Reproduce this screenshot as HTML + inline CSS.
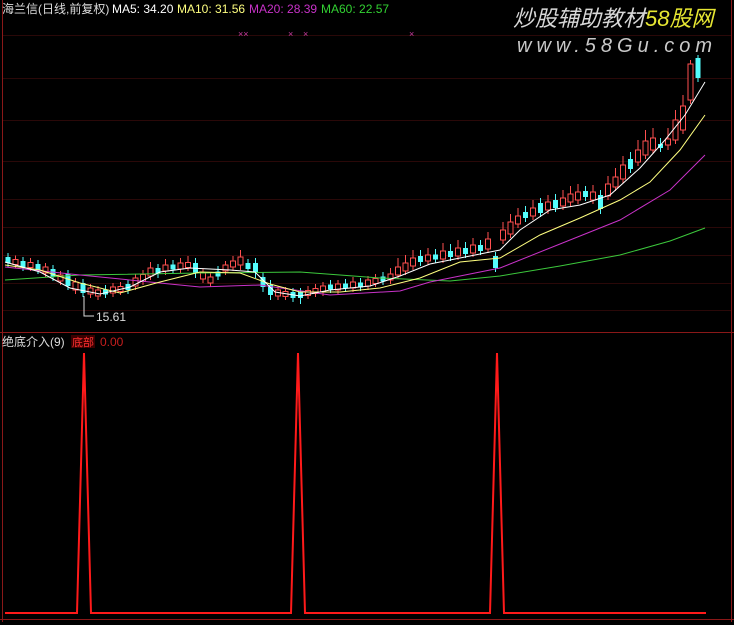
<!DOCTYPE html>
<html><head><meta charset="utf-8"><style>
html,body{margin:0;padding:0;background:#000;width:734px;height:625px;overflow:hidden}
svg{display:block}
text{font-family:"Liberation Sans","Noto Sans CJK SC",sans-serif}
</style></head><body>
<svg width="734" height="625" xmlns="http://www.w3.org/2000/svg">
<rect width="734" height="625" fill="#000"/>
<g stroke="#2a0808" stroke-width="1">
<line x1="3" y1="35.5" x2="731" y2="35.5"/><line x1="3" y1="78.5" x2="731" y2="78.5"/>
<line x1="3" y1="120.5" x2="731" y2="120.5"/><line x1="3" y1="161.5" x2="731" y2="161.5"/>
<line x1="3" y1="199.5" x2="731" y2="199.5"/><line x1="3" y1="227.5" x2="731" y2="227.5"/>
<line x1="3" y1="255.5" x2="731" y2="255.5"/><line x1="3" y1="283.5" x2="731" y2="283.5"/>
<line x1="3" y1="310.5" x2="731" y2="310.5"/>
</g>
<line x1="2.5" y1="0" x2="2.5" y2="622" stroke="#8a1818"/>
<line x1="731.5" y1="0" x2="731.5" y2="622" stroke="#8a1818"/>
<line x1="0" y1="332.5" x2="734" y2="332.5" stroke="#8a1818"/>
<line x1="0" y1="619.5" x2="734" y2="619.5" stroke="#8a1818"/>

<path fill="none" stroke="#ff5050" d="M15.5,255.5V268.5M30.5,258V271M45.5,263V277M60.5,271V285M75.5,278V294M90.5,284V298M98,286V300M113,283V297M120.5,282V295M135.5,274V290M143,270V285M150.5,262V280M165.5,259V275M180.5,258V273M188,256V271M203,269V283M210.5,273V287M225.5,261V275M233,256V271M240.5,250V270M278,286V300M285.5,287V300M308,286V299M315.5,284V297M323,282V296M338,280V294M353,277V292M368,276V290M375.5,274V287M390.5,268V284M398,258V279M405.5,255V275M413,250V270M428,248V265M443,243V263M458,240V260M473,238V257M488,232V253M503,222V244M510.5,214V238M518,208V228M533,200V220M548,195V214M563,190V210M570.5,186V206M578,184V204M593,185V204M608,176V200M615.5,168V191M623,156V183M638,140V166M645.5,130V159M653,128V154M668,128V150M675.5,110V144M683,95V134M690.5,60V104"/>
<path fill="none" stroke="#54fcfc" d="M8,253V267M23,257V271M38,260V274M53,265V281M68,270V290M83,279V297M105.5,285V298M128,280V294M158,264V278M173,260V273M195.5,258V278M218,266V280M248,259V273M255.5,258V278M263,272V292M270.5,280V300M293,288V302M300.5,288V304M330.5,280V293M345.5,279V292M360.5,278V291M383,272V285M420.5,250V266M435.5,249V263M450.5,244V261M465.5,242V258M480.5,240V255M495.5,252V272M525.5,206V222M540.5,198V217M555.5,194V212M585.5,186V201M600.5,190V214M630.5,152V173M660.5,138V152M698,55V82"/>
<g fill="#000" stroke="#ff5050">
<rect x="13" y="259.5" width="5" height="5"/><rect x="28" y="262.5" width="5" height="5"/><rect x="43" y="267" width="5" height="6"/><rect x="58" y="275" width="5" height="6"/><rect x="73" y="282" width="5" height="8"/><rect x="88" y="288" width="5" height="6"/><rect x="95.5" y="290" width="5" height="6"/><rect x="110.5" y="287" width="5" height="6"/><rect x="118" y="286.5" width="5" height="5"/><rect x="133" y="278" width="5" height="8"/><rect x="140.5" y="274.5" width="5" height="7"/><rect x="148" y="268" width="5" height="8"/><rect x="163" y="265" width="5" height="6"/><rect x="178" y="263" width="5" height="6"/><rect x="185.5" y="262.5" width="5" height="5"/><rect x="200.5" y="273" width="5" height="6"/><rect x="208" y="277" width="5" height="6"/><rect x="223" y="265" width="5" height="6"/><rect x="230.5" y="261" width="5" height="6"/><rect x="238" y="257" width="5" height="8"/><rect x="275.5" y="290" width="5" height="6"/><rect x="283" y="291.5" width="5" height="5"/><rect x="305.5" y="290.5" width="5" height="5"/><rect x="313" y="288.5" width="5" height="5"/><rect x="320.5" y="286" width="5" height="6"/><rect x="335.5" y="284" width="5" height="6"/><rect x="350.5" y="282" width="5" height="6"/><rect x="365.5" y="280" width="5" height="6"/><rect x="373" y="278.5" width="5" height="5"/><rect x="388" y="274" width="5" height="6"/><rect x="395.5" y="267" width="5" height="8"/><rect x="403" y="263" width="5" height="8"/><rect x="410.5" y="258" width="5" height="8"/><rect x="425.5" y="255" width="5" height="6"/><rect x="440.5" y="251" width="5" height="8"/><rect x="455.5" y="248" width="5" height="8"/><rect x="470.5" y="245" width="5" height="8"/><rect x="485.5" y="239" width="5" height="10"/><rect x="500.5" y="230" width="5" height="10"/><rect x="508" y="222" width="5" height="12"/><rect x="515.5" y="216" width="5" height="8"/><rect x="530.5" y="208" width="5" height="8"/><rect x="545.5" y="202" width="5" height="8"/><rect x="560.5" y="198" width="5" height="8"/><rect x="568" y="194" width="5" height="8"/><rect x="575.5" y="192" width="5" height="8"/><rect x="590.5" y="192" width="5" height="8"/><rect x="605.5" y="184" width="5" height="12"/><rect x="613" y="177" width="5" height="10"/><rect x="620.5" y="165" width="5" height="14"/><rect x="635.5" y="150" width="5" height="12"/><rect x="643" y="141" width="5" height="14"/><rect x="650.5" y="138" width="5" height="12"/><rect x="665.5" y="139" width="5" height="6"/><rect x="673" y="120" width="5" height="20"/><rect x="680.5" y="106" width="5" height="24"/><rect x="688" y="64" width="5" height="36"/>
</g>
<g fill="#54fcfc">
<rect x="5.5" y="257" width="5" height="6"/><rect x="20.5" y="261" width="5" height="6"/><rect x="35.5" y="264" width="5" height="6"/><rect x="50.5" y="269" width="5" height="8"/><rect x="65.5" y="274" width="5" height="12"/><rect x="80.5" y="283" width="5" height="10"/><rect x="103" y="289.5" width="5" height="5"/><rect x="125.5" y="284" width="5" height="6"/><rect x="155.5" y="268" width="5" height="6"/><rect x="170.5" y="264.5" width="5" height="5"/><rect x="193" y="263" width="5" height="10"/><rect x="215.5" y="271.5" width="5" height="5"/><rect x="245.5" y="263" width="5" height="6"/><rect x="253" y="263" width="5" height="10"/><rect x="260.5" y="277" width="5" height="10"/><rect x="268" y="285" width="5" height="10"/><rect x="290.5" y="292" width="5" height="6"/><rect x="298" y="292" width="5" height="6"/><rect x="328" y="284.5" width="5" height="5"/><rect x="343" y="283.5" width="5" height="5"/><rect x="358" y="282.5" width="5" height="5"/><rect x="380.5" y="276.5" width="5" height="5"/><rect x="418" y="256" width="5" height="6"/><rect x="433" y="254.5" width="5" height="5"/><rect x="448" y="251" width="5" height="6"/><rect x="463" y="248" width="5" height="6"/><rect x="478" y="245" width="5" height="6"/><rect x="493" y="256" width="5" height="12"/><rect x="523" y="212" width="5" height="6"/><rect x="538" y="203" width="5" height="10"/><rect x="553" y="200" width="5" height="8"/><rect x="583" y="191" width="5" height="6"/><rect x="598" y="195" width="5" height="14"/><rect x="628" y="159" width="5" height="10"/><rect x="658" y="144" width="5" height="4"/><rect x="695.5" y="58" width="5" height="20"/>
</g>

<g fill="none" stroke-width="1">
<polyline stroke="#3cc83c" points="5,280 80,275 200,273 300,272 380,278 450,281 500,276 560,266 620,255 670,241 705,228"/>
<polyline stroke="#c832c8" points="5,267 80,275 200,287 260,285 330,295 400,291 430,282 500,268 560,244 620,220 670,190 705,155"/>
<polyline stroke="#ffff80" points="5,265 40,270 80,283 120,293 160,282 200,272 240,273 270,284 300,292 340,292 380,288 420,278 460,262 500,258 540,235 580,218 620,200 650,182 680,150 705,115"/>
<polyline stroke="#ffffff" points="5,262 40,272 70,288 100,294 130,287 160,272 190,268 230,270 255,272 275,292 300,296 330,290 370,286 400,276 430,264 470,256 500,250 520,230 550,210 580,205 610,195 640,168 665,140 685,115 705,82"/>
</g>
<text x="2" y="13" font-size="12" fill="#dcdcdc">海兰信(日线,前复权)</text>
<text x="112" y="13" font-size="12" fill="#ffffff">MA5: 34.20</text>
<text x="177" y="13" font-size="12" fill="#ffff80">MA10: 31.56</text>
<text x="249" y="13" font-size="12" fill="#c832c8">MA20: 28.39</text>
<text x="321" y="13" font-size="12" fill="#32d232">MA60: 22.57</text>
<g font-size="9" fill="#c83ca0"><text x="238" y="37">××</text><text x="288" y="37">×</text><text x="303" y="37">×</text><text x="409" y="37">×</text></g>
<text x="513" y="26" font-size="22" font-style="italic" fill="#d8d8d8" font-family="'Noto Sans CJK SC',sans-serif">炒股辅助教材<tspan fill="#e6e632">58股网</tspan></text>
<text x="517" y="52" font-size="20" font-style="italic" fill="#c8c8c8" letter-spacing="5">www.58Gu.com</text>
<path d="M84,296 V316 H94" stroke="#ddd" fill="none"/>
<text x="96" y="321" font-size="12" fill="#dcdcdc">15.61</text>
<text x="2" y="346" font-size="12" fill="#dcdcdc">绝底介入(9)</text>
<rect x="71" y="335" width="24" height="13" fill="#3a0000"/>
<text x="72" y="346" font-size="11" fill="#ff3030">底部</text>
<text x="100" y="346" font-size="12" fill="#c81e1e">0.00</text>
<polyline fill="none" stroke="#ff1a1a" stroke-width="2" points="5,613 77,613 84,353 91,613 291,613 298,353 305,613 490,613 497,353 504,613 706,613"/>
</svg>
</body></html>
